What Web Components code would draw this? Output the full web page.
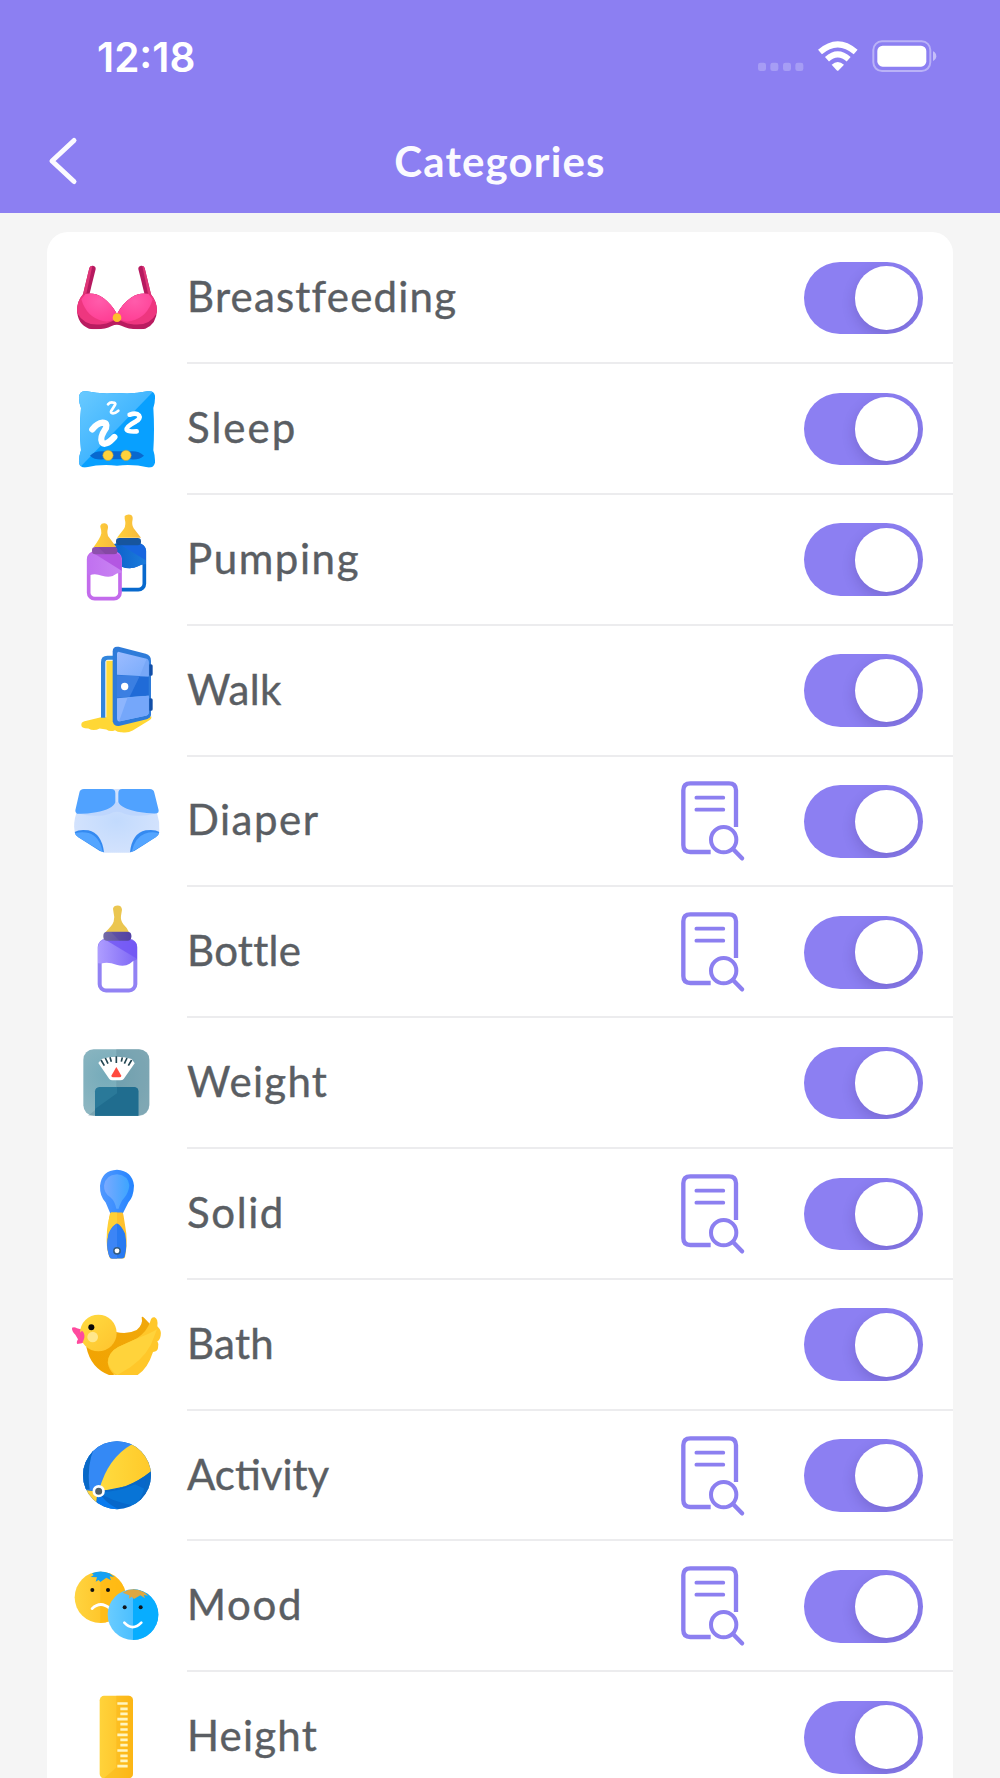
<!DOCTYPE html>
<html lang="en">
<head>
<meta charset="utf-8">
<title>Categories</title>
<style>
  html, body {
    margin: 0;
    height: 1778px;
    overflow: hidden;
    background: #f5f5f5;
    font-family: Lato, "Open Sans", sans-serif;
  }
</style>
</head>
<body>
<categories-screen></categories-screen>

<script>
// Artwork is drawn at three units per CSS pixel
const ICONS = {
  breastfeeding: {
    box: "27 30 288 288",
    art: `
      <defs>
        <radialGradient id="g" cx=".5" cy=".3" r=".7"><stop stop-color="#ff5cab"/><stop offset="1" stop-color="#ff3f95"/></radialGradient>
        <clipPath id="c"><path d="M68 164Q100 154 130 174Q156 194 171 222Q186 192 213 173Q243 154 274 164Q290 184 291 210Q290 252 256 266Q214 272 184 257Q170 251 155 258Q128 272 87 266Q52 252 51 210Q52 182 68 164z"/></clipPath>
      </defs>
      <path d="M68 167L88 84Q91 76 99 77Q108 79 107 87L87 168z" fill="#b6195f"/>
      <path d="M68 167L88 84Q91 77 97 78L78 166z" fill="#df3577"/>
      <path d="M274 167L254 84Q251 76 243 77Q234 79 235 87L255 168z" fill="#b6195f"/>
      <path d="M274 167L254 84Q251 77 247 78L265 166z" fill="#df3577"/>
      <g clip-path="url(#c)">
        <path d="M40 150h262v130H40z" fill="#b91c60"/>
        <path d="M51 150H171V236Q148 249 130 252Q75 262 51 218z" fill="#ee367f"/>
        <path d="M291 150H171V236Q194 249 212 252Q267 262 291 218z" fill="#ee367f"/>
        <path d="M64 178L80 158Q130 148 171 222V232Q154 248 128 243Q80 232 64 178z" fill="url(#g)"/>
        <path d="M278 178L262 158Q212 148 171 222V232Q188 248 214 243Q262 232 278 178z" fill="url(#g)"/>
      </g>
      <circle cx="171" cy="233" r="13" fill="#ffbd2d"/>`
  },
  sleep: {
    box: "27 422 288 288",
    art: `
      <defs>
        <linearGradient id="g" x1="0" y1="0" x2=".8" y2=".8"><stop stop-color="#6ccbff"/><stop offset="1" stop-color="#2baaff"/></linearGradient>
        <clipPath id="c"><path d="M80 453Q120 462 171 458Q222 462 262 453Q282 450 285 466Q286 484 280 503Q284 567 280 630Q286 648 285 667Q280 685 262 681Q222 671 171 676Q120 671 80 681Q60 684 57 667Q56 650 63 630Q57 567 63 503Q56 485 57 468Q60 450 80 453z"/></clipPath>
      </defs>
      <g clip-path="url(#c)">
        <path d="M50 445h245v245H50z" fill="#08a0ff"/>
        <path d="M50 445H288L60 681H50z" fill="url(#g)"/>
      </g>
      <path d="M90 646Q105 631 130 633H213Q235 631 252 646Q235 660 213 657H130Q105 660 90 646z" fill="#0868cf"/>
      <g fill="#ffd23b" stroke="#c19a3d" stroke-width="1.5"><circle cx="144" cy="645" r="15.500"/><circle cx="198" cy="645" r="15.500"/></g>
      <g fill="none" stroke="#fff" stroke-linecap="round" stroke-linejoin="round">
        <path d="M144 492Q151 484 161 487Q170 489 163 497L154 511Q150 519 159 519Q166 519 175 511" stroke-width="8"/>
        <path d="M209 523Q230 516 237 525Q243 534 228 543Q198 559 200 568Q203 575 230 573" stroke-width="14"/>
        <path d="M97 567Q111 549 128 547Q143 547 138 563Q118 592 126 606Q136 619 163 590" stroke-width="19"/>
      </g>`
  },
  pumping: {
    box: "27 35 288 288",
    art: `
      <defs>
        <linearGradient id="g"><stop stop-color="#0d5fca"/><stop offset="1" stop-color="#1b7cdb"/></linearGradient>
        <linearGradient id="y"><stop stop-color="#ffd039"/><stop offset="1" stop-color="#f6b93d"/></linearGradient>
        <linearGradient id="v"><stop stop-color="#c070f0"/><stop offset="1" stop-color="#c984f2"/></linearGradient>
      </defs>
      <path d="M194 47Q200 41 211 43Q219 45 218 56Q214 74 221 84L243 112H171L192 85Q199 73 194 55z" fill="url(#y)"/>
      <rect x="155" y="134" width="98" height="134" rx="18" fill="#fff" stroke="#0869cd" stroke-width="11"/>
      <path d="M163 139Q171 130 184 130H240Q257 135 258 153V192Q247 190 234 198Q211 209 185 199H155z" fill="#1766df"/>
      <path d="M163 139L176 130L257 180V192Q247 190 234 198Q211 209 185 199H155z" fill="url(#g)"/>
      <rect x="168" y="113" width="75" height="22" rx="10" fill="#17559e"/>
      <path d="M121 76Q124 68 134 69Q145 71 144 82Q139 101 147 111L169 140H101Q122 112 124 99Q124 88 121 80z" fill="url(#y)"/>
      <rect x="86" y="158" width="94" height="137" rx="18" fill="#fff" stroke="#c36bec" stroke-width="11"/>
      <path d="M81 222V177Q82 163 99 159H164Q184 160 185 179V217Q170 217 158 227Q144 232 126 226Q105 218 91 224z" fill="url(#v)"/>
      <path d="M101 159H164Q184 160 185 179V211z" fill="#b357e2"/>
      <rect x="96" y="140" width="76" height="22" rx="10" fill="#8e50ae"/>
      <path d="M115 141H162Q171 142 172 151L170 161H136z" fill="#793f98" opacity=".45"/>`
  },
  walk: {
    box: "27 427.500 288 288",
    art: `
      <defs><linearGradient id="g" x1="0" y1="0" x2="1" y2="1"><stop stop-color="#9cbcff"/><stop offset="1" stop-color="#79abfb"/></linearGradient></defs>
      <path d="M64 674Q65 666 80 664L123 653H240L274 651Q276 658 267 663L218 693Q204 701 185 698Q174 699 165 692Q151 698 139 690L119 687Q101 696 85 687Q62 687 64 674z" fill="#ffd735"/>
      <path d="M123 655V488Q123 469 142 469H160V481H143Q137 481 136 487V655z" fill="#3185dc"/>
      <path d="M139 484h20v181l-20-9z" fill="#ffdb3b"/>
      <path d="M158 456Q158 439 176 442L257 463Q273 468 273 484V645Q273 655 260 659L180 679Q163 683 158 666z" fill="#2e7bd9"/>
      <path d="M171 527L266 531V587L171 595z" fill="#206bd7"/>
      <path d="M171 527L239 530L209 592L171 595z" fill="#3b7fe2"/>
      <path d="M171 462Q172 455 180 458L260 478Q266 480 266 488V531L171 526z" fill="url(#g)"/>
      <path d="M171 596L266 589V638Q267 646 257 649L180 665Q171 667 171 656z" fill="#8db5fd"/>
      <path d="M203 593L266 589V638Q267 646 257 649L177 666z" fill="#75a7fa"/>
      <path d="M260 478Q266 480 266 488V530H239z" fill="#77a7f7"/>
      <path d="M268 495q10-3 10 4v25q0 6-10 4zM268 597q10-3 10 4v28q0 7-10 4z" fill="#124ea7"/>
      <circle cx="194" cy="561" r="11" fill="#fff"/>`
  },
  diaper: {
    box: "27 10 288 288",
    art: `
      <defs><radialGradient id="g" cx=".5" cy=".5" r=".55"><stop stop-color="#c2dafd"/><stop offset="1" stop-color="#d4e3fd"/></radialGradient></defs>
      <path d="M158 58H184L291 130Q300 157 298 184Q290 207 211 249H131L44 187Q39 160 49 131z" fill="url(#g)"/>
      <path d="M50 131Q119 129 164 98H177Q222 132 291 131Q234 145 195 133Q171 119 148 133Q111 145 50 131z" fill="#bed6fd"/>
      <path d="M58 69Q60 58 72 58H153Q166 58 166 70V98Q158 119 108 128Q72 134 51 132Q45 130 46 122zM283 69Q281 58 269 58H187Q175 58 175 70V97Q182 116 232 126Q267 132 291 131Q297 129 296 122z" fill="#50a2ff"/>
      <path d="M44 187Q57 178 85 182Q125 191 132 248Q119 246 110 238L55 203Q46 198 44 187zM298 187Q285 178 257 182Q216 191 210 248Q223 246 232 238L287 203Q296 198 298 187z" fill="#348af1"/>
      <path d="M45 191Q65 185 86 190Q119 200 128 247L55 203Q46 198 45 191zM297 191Q277 184 254 192Q224 203 215 247L287 203Q296 198 297 191z" fill="#54a5ff"/>`
  },
  bottle: {
    box: "27 402.500 288 288",
    art: `
      <defs>
        <linearGradient id="g"><stop stop-color="#ae9dff"/><stop offset="1" stop-color="#7d66f5"/></linearGradient>
        <linearGradient id="n"><stop stop-color="#746ba5"/><stop offset="1" stop-color="#5544a7"/></linearGradient>
      </defs>
      <path d="M159 417Q161 407 173 407Q185 407 186 420L183 438Q181 452 190 463Q203 475 207 487H136Q158 466 161 455Q165 442 161 430z" fill="#ebc650"/>
      <rect x="119" y="513" width="107" height="149" rx="19" fill="#fff" stroke="#9282f4" stroke-width="12"/>
      <path d="M114 580V532Q116 513 135 509H210Q230 513 231 531V569Q219 571 209 582Q193 592 169 585Q145 575 124 581z" fill="url(#g)"/>
      <path d="M135 509H210Q230 513 231 531V567z" fill="#7055f4" opacity=".8"/>
      <rect x="130" y="486" width="84" height="27" rx="12" fill="url(#n)"/>
      <path d="M154 487H204Q214 489 214 499Q213 509 204 512H178z" fill="#4e3ba0" opacity=".35"/>`
  },
  weight: {
    box: "27 15 288 288",
    art: `
      <defs><radialGradient id="g" cx=".35" cy=".4" r=".75"><stop stop-color="#75abba"/><stop offset="1" stop-color="#93b9c3"/></radialGradient></defs>
      <rect x="70" y="58" width="198" height="199" rx="31" fill="url(#g)"/>
      <path d="M169 58H237Q268 62 268 91V223Q266 252 237 257H84L169 190z" fill="#5b8797" opacity=".35"/>
      <path d="M105 257V184Q106 172 118 171H222Q235 172 235 184V257z" fill="#2a7999"/>
      <path d="M171 190V171H222Q235 172 235 184V257H105V237z" fill="#206d8f"/>
      <path d="M115 99L125 87Q169 73 215 87L224 100L191 147Q188 151 181 151H157Q151 151 148 147z" fill="#fff"/>
      <path d="M169 79V99M150 82L154 95M187 82L184 95M136 84L144 101M201 84L193 101M123 90L133 107M215 90L205 107" fill="none" stroke="#244753" stroke-width="5"/>
      <path d="M169 111L184 137Q184 142 178 142H160Q154 142 154 137z" fill="#ff4a3e"/>`
  },
  solid: {
    box: "27 407.400 288 288",
    art: `
      <defs>
        <linearGradient id="g"><stop stop-color="#5198ff"/><stop offset="1" stop-color="#2484ff"/></linearGradient>
        <linearGradient id="h"><stop stop-color="#79a9ff"/><stop offset="1" stop-color="#3da5ff"/></linearGradient>
      </defs>
      <path d="M151 550L137 517Q119 499 120 467Q125 421 171 419Q217 423 222 466Q221 501 205 517L188 551z" fill="url(#g)"/>
      <path d="M132 466Q136 434 171 432Q204 435 208 465Q206 486 194 501Q181 515 176 536H169Q166 514 151 501Q131 489 132 466z" fill="url(#h)"/>
      <path d="M153 547H187Q190 549 192 565L199 610Q202 647 195 681Q194 685 188 685H151Q147 681 146 674Q138 650 141 615L147 565Q149 549 153 547z" fill="#ffc12d"/>
      <path d="M153 547H171V581Q148 602 141 642Q138 600 147 565z" fill="#ffd037"/>
      <path d="M171 580Q183 584 195 610Q203 648 194 680Q192 685 186 685H156Q149 684 147 676Q137 646 146 611Q156 586 171 580z" fill="#287af1"/>
      <path d="M171 580V685H156Q149 684 147 676Q137 646 146 611Q156 586 171 580z" fill="#3c85f6"/>
      <circle cx="171" cy="662" r="9.500" fill="#fff" stroke="#345c82" stroke-width="4.500"/>`
  },
  bath: {
    box: "27 20 288 288",
    art: `
      <defs>
        <linearGradient id="g" x1="0" y1="0" x2="1" y2="1"><stop stop-color="#ffdc41"/><stop offset="1" stop-color="#ffc32e"/></linearGradient>
        <linearGradient id="o" x1="1" y1="0" x2="0" y2="1"><stop stop-color="#f0a80c"/><stop offset="1" stop-color="#f2a300"/></linearGradient>
      </defs>
      <path d="M168 125Q203 133 230 119Q250 103 245 80Q247 77 252 82L270 101L268 180L160 254H147Q92 233 79 170L160 125z" fill="url(#o)"/>
      <path d="M164 254Q145 239 143 216Q145 186 174 170L229 145Q261 125 271 93Q274 79 284 81Q295 86 292 108Q306 122 302 136Q299 151 292 152Q298 162 294 173Q293 183 279 185Q263 235 233 254z" fill="#ffc72a"/>
      <path d="M172 254Q151 241 144 218Q144 186 175 170L229 145Q271 130 291 117L282 140Q267 191 211 231z" fill="#ffd33b"/>
      <path d="M36 112Q43 108 51 114L70 119L76 146Q75 156 65 159L52 161Q48 157 54 147L46 133Q35 123 36 112z" fill="#ff4a9e"/>
      <circle cx="115" cy="128" r="55" fill="url(#g)"/>
      <path d="M66 121Q75 128 73 142L69 154L58 158L56 130z" fill="#ff4a9e"/>
      <circle cx="94" cy="111" r="9" fill="#080808"/>
      <circle cx="98" cy="140" r="16" fill="#ffe78b"/>`
  },
  activity: {
    box: "27 412.400 288 288",
    art: `
      <defs>
        <clipPath id="c"><circle cx="171" cy="557" r="102"/></clipPath>
        <linearGradient id="y"><stop stop-color="#ffdc40"/><stop offset="1" stop-color="#ffc929"/></linearGradient>
      </defs>
      <g clip-path="url(#c)">
        <path d="M65 450h220v220H65z" fill="#0767ca"/>
        <path d="M65 450H230L113 605L65 600z" fill="#3489f5"/>
        <path d="M65 450H117Q77 508 89 600H65z" fill="#0868c7"/>
        <path d="M216 464Q143 505 117 603Q197 605 274 545V463z" fill="url(#y)"/>
        <path d="M65 600L112 607L109 638L106 660L65 640z" fill="#ffd33c"/>
        <path d="M112 605L109 668H205L171 657Q133 637 114 605z" fill="#087aee"/>
        <path d="M115 607Q150 635 220 648Q239 640 258 600L225 584Q170 609 115 607z" fill="#0874d6"/>
        <path d="M114 607Q205 605 278 541V600L230 645Q255 610 258 565Q224 585 220 586z" fill="#0868c5"/>
      </g>
      <circle cx="116" cy="605" r="14.500" fill="#50606c" stroke="#fff" stroke-width="8"/>`
  },
  mood: {
    box: "27 25 288 288",
    art: `
      <defs>
        <linearGradient id="y"><stop stop-color="#ffd440"/><stop offset="1" stop-color="#ffb917"/></linearGradient>
        <linearGradient id="b"><stop stop-color="#6accff"/><stop offset="1" stop-color="#2db2ff"/></linearGradient>
      </defs>
      <circle cx="121" cy="143" r="77" fill="url(#y)"/>
      <path d="M121 66A77 77 0 0 1 121 220z" fill="#ffb80f" opacity=".65"/>
      <path d="M96 71Q121 60 148 71L163 82L149 80L153 92L139 84L121 97L116 91L107 96L111 83L92 82L101 76z" fill="#16a0f3"/>
      <circle cx="97" cy="121" r="6" fill="#111"/><circle cx="144" cy="121" r="6" fill="#111"/>
      <path d="M96 177Q122 152 150 177" fill="none" stroke="#fff" stroke-width="8" stroke-linecap="round"/>
      <circle cx="219" cy="195" r="76" fill="url(#b)"/>
      <path d="M219 119A76 76 0 0 1 219 271z" fill="#08adff"/>
      <path d="M188 129Q218 109 253 128L264 138L251 136L255 146L241 137L222 148L215 141L207 147L208 137z" fill="#dea742"/>
      <circle cx="194" cy="173" r="6" fill="#10151b"/><circle cx="242" cy="173" r="6" fill="#10151b"/>
      <path d="M193 219Q218 246 244 219" fill="none" stroke="#fff" stroke-width="8" stroke-linecap="round"/>`
  },
  height: {
    box: "27 417.400 288 288",
    art: `
      <defs><linearGradient id="g"><stop stop-color="#ffd33b"/><stop offset=".5" stop-color="#ffc82e"/><stop offset="1" stop-color="#ffb816"/></linearGradient></defs>
      <rect x="119" y="438" width="100" height="247" rx="13" fill="url(#g)"/>
      <path d="M169 438H206Q219 439 219 451V672Q219 684 206 685H132L169 653z" fill="#f9b315" opacity=".45"/>
      <path d="M172 461H203M181 477H203M181 492H203M172 508H203M181 523H203M181 539H203M172 555H203M181 570H203M181 586H203M172 602H203M181 618H203M181 633H203M172 649H203" fill="none" stroke="#fff5bf" stroke-width="8"/>`
  }
};

class StatusBar extends HTMLElement {
  constructor() {
    super();
    this.attachShadow({ mode: "open" });
  }

  static get styles() {
    return /* css */`
      :host {
        display: flex;
        align-items: center;
        justify-content: space-between;
        height: 114px;
        padding: 0 61px 0 97px;
        box-sizing: border-box;
        color: #fff;
      }

      .time {
        padding-top: 1px;
        font: 600 40.500px/48px Inter, sans-serif;
      }

      svg {
        display: block;
        width: 181.670px;
        height: 36.670px;
        margin-bottom: 1.500px;
      }
    `;
  }

  connectedCallback() {
    this.shadowRoot.innerHTML = /* html */`
    <style>${StatusBar.styles}</style>
    <span class="time"><slot></slot></span>
    <svg viewBox="50 55 545 110" fill="#fff">
      <g opacity=".23">
        <rect x="53" y="129" width="24" height="25" rx="7"/>
        <rect x="90" y="129" width="24" height="25" rx="7"/>
        <rect x="128" y="129" width="24" height="25" rx="7"/>
        <rect x="165" y="129" width="24" height="25" rx="7"/>
      </g>
      <g fill="none" stroke="#fff" stroke-width="18">
        <path d="M239 97Q292 51 346 97"/>
        <path d="M260 119Q292 90 325 119"/>
      </g>
      <path d="M274 135Q292 119 311 135L295 152Q292 155 289 152z"/>
      <rect x="399" y="65" width="171" height="89" rx="26" fill="none" stroke="#fff" stroke-opacity=".4" stroke-width="6"/>
      <rect x="411" y="78" width="147" height="63" rx="16"/>
      <path d="M578 95Q588 99 588 110Q588 120 578 124z" opacity=".5"/>
    </svg>
    `;
  }
}

customElements.define("status-bar", StatusBar);

class NavBar extends HTMLElement {
  constructor() {
    super();
    this.attachShadow({ mode: "open" });
  }

  static get styles() {
    return /* css */`
      :host {
        display: grid;
        grid-template-columns: 80px 1fr 80px;
        align-items: center;
        height: 94px;
        padding-bottom: 5px;
        color: #fbfaff;
      }

      button {
        border: 0;
        padding: 0 0 0 46px;
        background: transparent;
      }

      svg {
        display: block;
        width: 34px;
        height: 50px;
      }

      h1 {
        margin: 0;
        font-size: 42px;
        line-height: 50px;
        font-weight: 700;
        letter-spacing: 1.150px;
        text-align: center;
      }
    `;
  }

  connectedCallback() {
    this.shadowRoot.innerHTML = /* html */`
    <style>${NavBar.styles}</style>
    <button aria-label="Back">
      <svg viewBox="0 0 34 50" fill="none" stroke="#fbfaff" stroke-width="5" stroke-linecap="round" stroke-linejoin="round"><path d="M28 4.500L6 25L28 45.500"/></svg>
    </button>
    <h1><slot></slot></h1>
    `;
  }
}

customElements.define("nav-bar", NavBar);

class CategoryIcon extends HTMLElement {
  constructor() {
    super();
    this.attachShadow({ mode: "open" });
  }

  static get styles() {
    return /* css */`
      :host {
        display: block;
        width: 96px;
        height: 96px;
      }

      svg {
        display: block;
        width: 100%;
        height: 100%;
      }
    `;
  }

  connectedCallback() {
    const icon = ICONS[this.getAttribute("name")];
    this.shadowRoot.innerHTML = /* html */`
    <style>${CategoryIcon.styles}</style>
    <svg viewBox="${icon.box}">${icon.art}</svg>
    `;
  }
}

customElements.define("category-icon", CategoryIcon);

class ToggleSwitch extends HTMLElement {
  constructor() {
    super();
    this.attachShadow({ mode: "open" });
  }

  static get styles() {
    return /* css */`
      :host {
        display: flex;
        justify-content: flex-end;
        align-items: center;
        width: 119.300px;
        height: 72.600px;
        padding-right: 4.600px;
        box-sizing: border-box;
        border-radius: 37px;
        background: #8c7ff2;
        overflow: hidden;
      }

      .knob {
        width: 63.600px;
        height: 63.600px;
        border-radius: 50%;
        background: #fff;
        box-shadow: 0 5px 14px rgba(40, 20, 90, 0.200);
      }
    `;
  }

  connectedCallback() {
    this.shadowRoot.innerHTML = /* html */`
    <style>${ToggleSwitch.styles}</style>
    <div class="knob"></div>
    `;
  }
}

customElements.define("toggle-switch", ToggleSwitch);

class CategoryRow extends HTMLElement {
  constructor() {
    super();
    this.attachShadow({ mode: "open" });
  }

  static get styles() {
    return /* css */`
      :host {
        display: flex;
        align-items: center;
        height: 130.830px;
        padding-left: 22px;
        gap: 22px;
      }

      category-icon {
        margin-bottom: 1.400px;
      }

      .body {
        flex: 1;
        display: flex;
        align-items: center;
        height: 100%;
        padding: 1px 30px 0 0;
        box-sizing: border-box;
        border-bottom: 2px solid #ececee;
      }

      .label {
        flex: 1;
        padding-bottom: 4px;
        color: #5a5e63;
        font-size: 42px;
        line-height: 50px;
        white-space: nowrap;
        -webkit-text-stroke: 0.400px #5a5e63;
      }

      .details {
        display: block;
        width: 66px;
        height: 80px;
        margin-right: 57.700px;
      }
    `;
  }

  connectedCallback() {
    const spacing = this.getAttribute("spacing") ?? "1";
    const details = this.hasAttribute("details") ? /* html */`
      <svg class="details" viewBox="60 64 198 240" fill="none" stroke="#8c7ff0" stroke-width="13" stroke-linecap="round">
        <path d="M228 202V92Q228 71 207 71H91Q70 71 70 92V256Q70 277 91 277H152" stroke-linecap="butt"/>
        <path d="M109 114H190M109 150H190" stroke-width="11"/>
        <circle cx="191" cy="240" r="38" stroke-width="12"/>
        <path d="M219 268L246 296"/>
      </svg>` : "";
    this.shadowRoot.innerHTML = /* html */`
    <style>${CategoryRow.styles}</style>
    <category-icon name="${this.getAttribute("icon")}"></category-icon>
    <div class="body">
      <span class="label" style="letter-spacing: ${spacing}px"><slot></slot></span>
      ${details}
      <toggle-switch></toggle-switch>
    </div>
    `;
  }
}

customElements.define("category-row", CategoryRow);

class CategoriesScreen extends HTMLElement {
  constructor() {
    super();
    this.attachShadow({ mode: "open" });
  }

  static get styles() {
    return /* css */`
      :host {
        display: block;
        height: 1778px;
        overflow: hidden;
        background: #f5f5f5;
      }

      header {
        height: 213px;
        background: #8c7ff2;
      }

      main {
        margin: 19px 47px 0;
        padding-top: 1.200px;
        border-radius: 21px 21px 0 0;
        background: #fff;
      }
    `;
  }

  connectedCallback() {
    this.shadowRoot.innerHTML = /* html */`
    <style>${CategoriesScreen.styles}</style>
    <header>
      <status-bar>12:18</status-bar>
      <nav-bar>Categories</nav-bar>
    </header>
    <main>
      <category-row icon="breastfeeding" spacing="1.2">Breastfeeding</category-row>
      <category-row icon="sleep" spacing="2">Sleep</category-row>
      <category-row icon="pumping" spacing="1.6">Pumping</category-row>
      <category-row icon="walk" spacing="0.4">Walk</category-row>
      <category-row icon="diaper" spacing="1.5" details>Diaper</category-row>
      <category-row icon="bottle" spacing="0.3" details>Bottle</category-row>
      <category-row icon="weight" spacing="1.3">Weight</category-row>
      <category-row icon="solid" spacing="1.6" details>Solid</category-row>
      <category-row icon="bath" spacing="0.3">Bath</category-row>
      <category-row icon="activity" spacing="0" details>Activity</category-row>
      <category-row icon="mood" spacing="1.7" details>Mood</category-row>
      <category-row icon="height" spacing="1.2">Height</category-row>
    </main>
    `;
  }
}

customElements.define("categories-screen", CategoriesScreen);
</script>
</body>
</html>
